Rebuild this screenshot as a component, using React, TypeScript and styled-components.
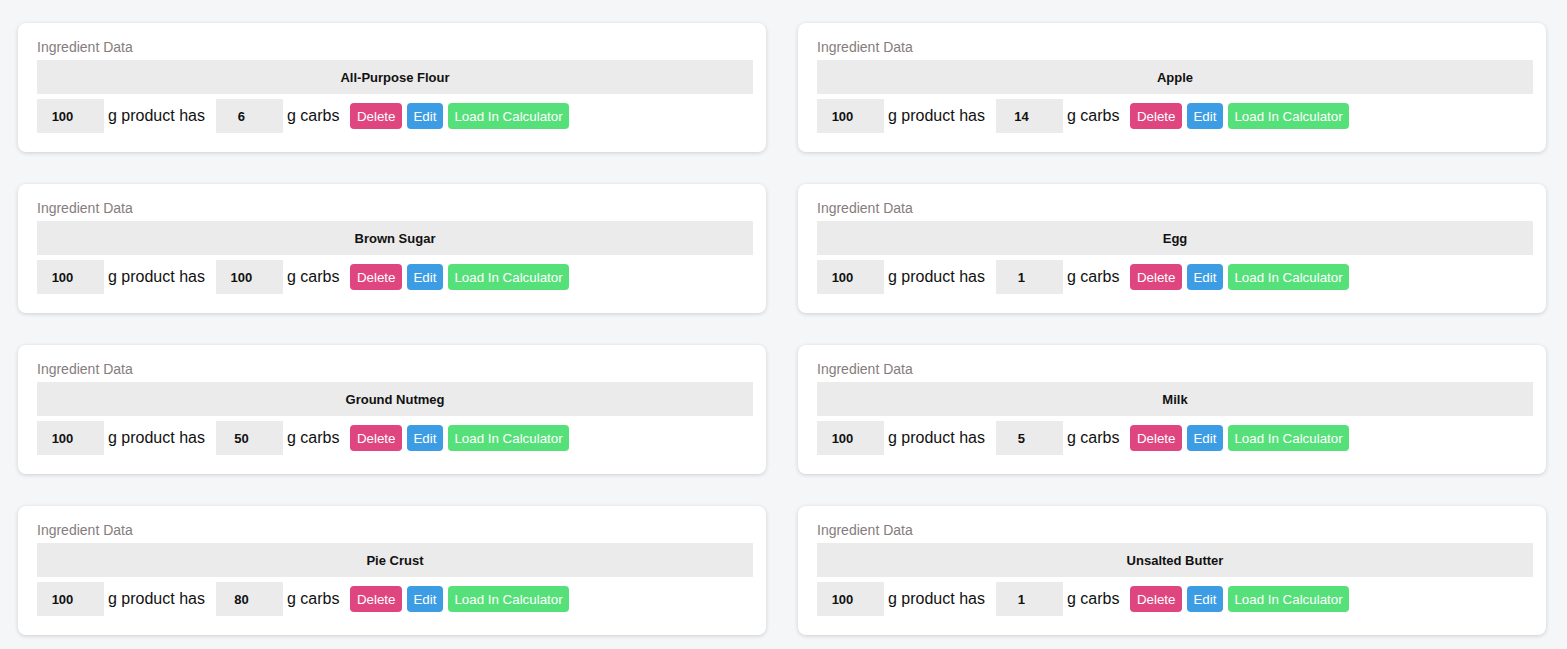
import React from 'react';
import styled, { createGlobalStyle } from 'styled-components';

const GlobalStyle = createGlobalStyle`
    body {
        margin: 0;
        background: #f5f6f8;
        font-family: 'Liberation Sans', Arial, sans-serif;
    }
`;

type Ingredient = {
    name: string;
    grams: number;
    carbs: number;
};

const ingredients: Ingredient[] = [
    { name: 'All-Purpose Flour', grams: 100, carbs: 6 },
    { name: 'Apple', grams: 100, carbs: 14 },
    { name: 'Brown Sugar', grams: 100, carbs: 100 },
    { name: 'Egg', grams: 100, carbs: 1 },
    { name: 'Ground Nutmeg', grams: 100, carbs: 50 },
    { name: 'Milk', grams: 100, carbs: 5 },
    { name: 'Pie Crust', grams: 100, carbs: 80 },
    { name: 'Unsalted Butter', grams: 100, carbs: 1 },
];

const Page = styled.div`
    display: grid;
    grid-template-columns: 1fr 1fr;
    column-gap: 32px;
    row-gap: 32px;
    padding: 23px 21px 14px 18px;
`;

const Card = styled.div`
    background: #ffffff;
    border-radius: 8px;
    box-shadow: 0 1px 4px rgba(0, 0, 0, 0.16);
    padding: 16px 13px 19px 19px;
`;

const Label = styled.div`
    font-size: 14px;
    line-height: 16px;
    color: #857c7c;
    margin-bottom: 5px;
`;

const TitleBar = styled.div`
    background: #ebebeb;
    height: 34px;
    display: flex;
    align-items: center;
    justify-content: center;
    font-size: 13px;
    font-weight: bold;
    color: #111;
`;

const Row = styled.div`
    display: flex;
    align-items: center;
    margin-top: 5px;
`;

const ValueBox = styled.div`
    width: 67px;
    height: 34px;
    box-sizing: border-box;
    padding-right: 16px;
    background: #ebebeb;
    display: flex;
    align-items: center;
    justify-content: center;
    font-size: 13px;
    font-weight: bold;
    color: #111;
`;

const RowText = styled.span`
    font-size: 16px;
    color: #111;
    margin: 0 11px 0 4px;
`;

const Button = styled.button<{ $color: string }>`
    height: 26px;
    padding: 0 6.5px;
    margin-right: 5px;
    border: none;
    border-radius: 4px;
    background: ${({ $color }) => $color};
    color: #ffffff;
    font-family: 'Liberation Sans', Arial, sans-serif;
    font-size: 13.33px;
    cursor: pointer;
`;

const IngredientCard = ({ name, grams, carbs }: Ingredient) => {
    return (
        <Card>
            <Label>Ingredient Data</Label>
            <TitleBar>{name}</TitleBar>
            <Row>
                <ValueBox>{grams}</ValueBox>
                <RowText>g product has</RowText>
                <ValueBox>{carbs}</ValueBox>
                <RowText>g carbs</RowText>
                <Button $color="#df4680">Delete</Button>
                <Button $color="#3d9de4">Edit</Button>
                <Button $color="#56e07a">Load In Calculator</Button>
            </Row>
        </Card>
    );
};

export default function App() {
    return (
        <>
            <GlobalStyle />
            <Page>
                {ingredients.map((item) => (
                    <IngredientCard key={item.name} {...item} />
                ))}
            </Page>
        </>
    );
}
